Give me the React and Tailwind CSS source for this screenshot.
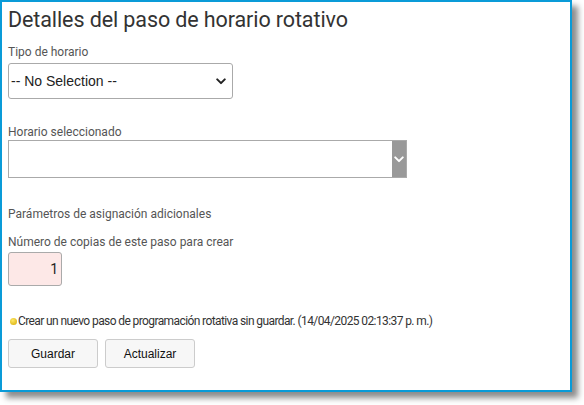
const Chevron = ({ className }) => (
  <svg viewBox="0 0 12 8" className={className} fill="none" stroke="currentColor" strokeWidth="2.4" strokeLinecap="round" strokeLinejoin="round">
    <path d="M1.5 1.5 L6 6 L10.5 1.5" />
  </svg>
)

const App = () => {
  return (
    <div className="w-[584px] h-[405px] bg-white font-['Roboto',sans-serif]">
      <div className="w-[572px] h-[392px] border-2 border-[#0a9bd8] bg-white shadow-[6px_6px_6px_rgba(0,0,0,0.45)] px-[6px] pt-[5px]">
        <h1 className="text-[21.5px] leading-[26px] tracking-[-0.1px] text-[#333]">Detalles del paso de horario rotativo</h1>

        <p className="mt-[12px] text-[12px] leading-[14px] text-[#555]">Tipo de horario</p>
        <div className="mt-[4px] w-[225px] h-[36px] border border-[#aaa] rounded-[3px] flex items-center justify-between pl-[2px] pr-[6px] font-['Liberation_Sans',sans-serif] text-[14px] text-[#222]">
          <span>-- No Selection --</span>
          <Chevron className="w-[10px] h-[7px] text-[#222]" />
        </div>

        <p className="mt-[26px] text-[12px] leading-[14px] text-[#555]">Horario seleccionado</p>
        <div className="mt-[1px] w-[399px] h-[38px] border border-[#aaa] flex">
          <div className="flex-1" />
          <div className="w-[14px] bg-[#999] flex items-center justify-center">
            <Chevron className="w-[10px] h-[7px] text-white" />
          </div>
        </div>

        <p className="mt-[29px] text-[12px] leading-[14px] text-[#555]">Parámetros de asignación adicionales</p>
        <p className="mt-[14px] text-[12px] leading-[14px] text-[#555]">Número de copias de este paso para crear</p>
        <div className="mt-[3px] w-[54px] h-[34px] border border-[#aaa] rounded-[3px] bg-[#fde8e7] flex items-center justify-end pr-[3px] text-[14px] text-[#222]">1</div>

        <div className="mt-[28px] flex items-center text-[12px] leading-[14px] tracking-[-0.6px] text-[#333]">
          <span className="w-[7px] h-[7px] rounded-full bg-[radial-gradient(circle_at_40%_35%,#ffe866,#d4a800)] ml-[2px] mr-[1px]" />
          <span>Crear un nuevo paso de programación rotativa sin guardar. (14/04/2025 02:13:37 p. m.)</span>
        </div>

        <div className="mt-[11px] flex gap-[7px] font-['Liberation_Sans',sans-serif]">
          <button className="w-[90px] h-[29px] border border-[#ccc] rounded-[3px] bg-[#f7f7f7] text-[12px] text-[#111]">Guardar</button>
          <button className="w-[90px] h-[29px] border border-[#ccc] rounded-[3px] bg-[#f7f7f7] text-[12px] text-[#111]">Actualizar</button>
        </div>
      </div>
    </div>
  )
}

export default App
